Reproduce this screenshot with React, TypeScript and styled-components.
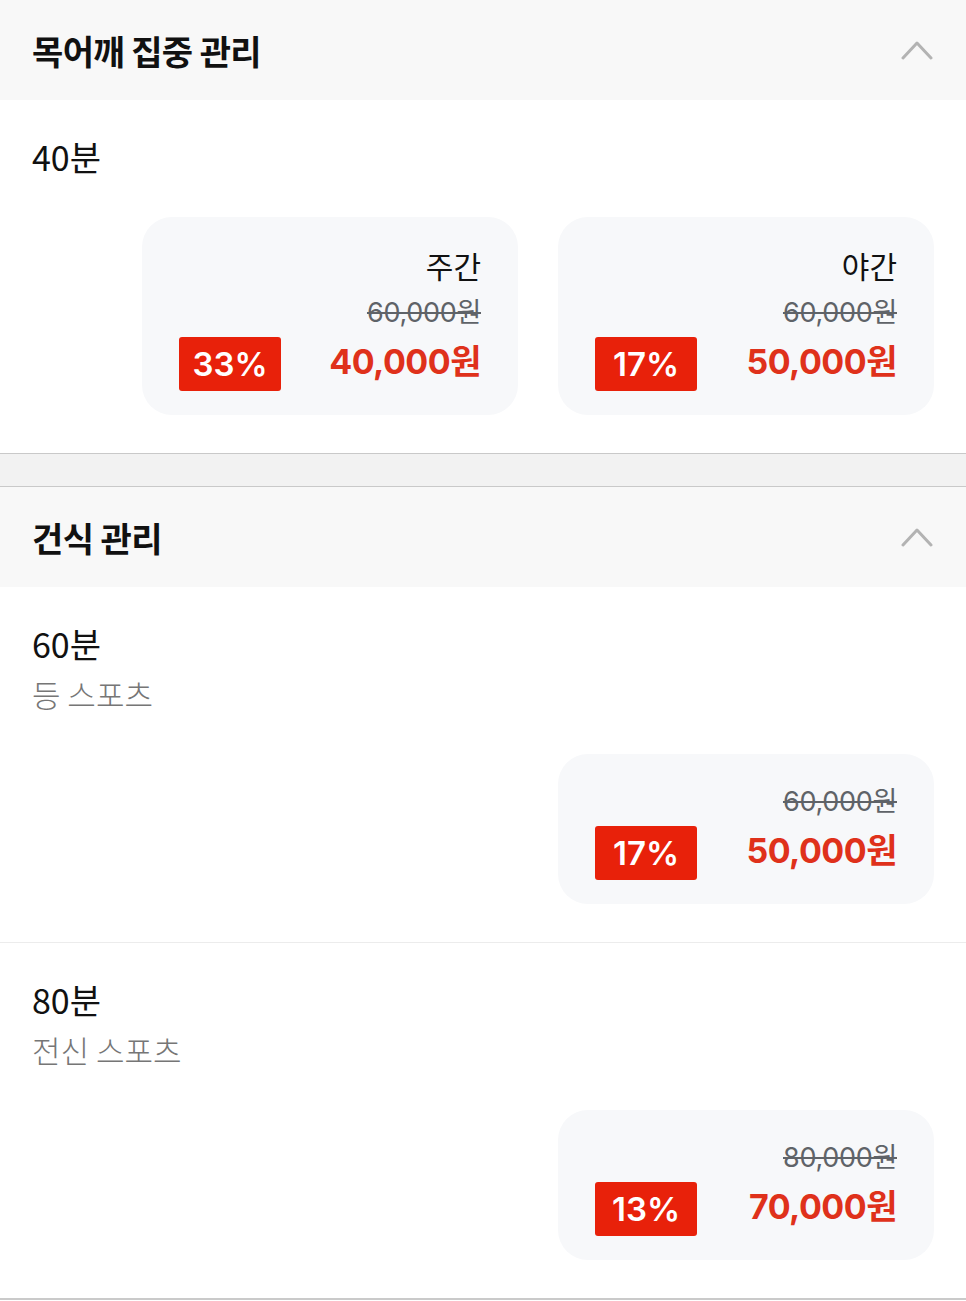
import styled, { createGlobalStyle } from "styled-components";

const GlobalStyle = createGlobalStyle`
  body {
    margin: 0;
    background: #ffffff;
    font-family: "Noto Sans CJK KR", "Noto Sans", sans-serif;
    color: #111111;
  }
`;

type Option = {
  label?: string;
  original: string;
  discount: string;
  price: string;
};

type Item = {
  duration: string;
  description?: string;
  options: Option[];
};

type Group = {
  title: string;
  items: Item[];
};

const groups: Group[] = [
  {
    title: "목어깨 집중 관리",
    items: [
      {
        duration: "40분",
        options: [
          { label: "주간", original: "60,000원", discount: "33%", price: "40,000원" },
          { label: "야간", original: "60,000원", discount: "17%", price: "50,000원" },
        ],
      },
    ],
  },
  {
    title: "건식 관리",
    items: [
      {
        duration: "60분",
        description: "등 스포츠",
        options: [{ original: "60,000원", discount: "17%", price: "50,000원" }],
      },
      {
        duration: "80분",
        description: "전신 스포츠",
        options: [{ original: "80,000원", discount: "13%", price: "70,000원" }],
      },
    ],
  },
];

const Page = styled.div`
  display: flex;
  flex-direction: column;
  border-bottom: 2px solid #cacaca;
`;

const Gap = styled.div`
  height: 32px;
  background: #f2f2f2;
  border-top: 1px solid #c9c9c9;
  border-bottom: 1px solid #c9c9c9;
`;

const Header = styled.div`
  height: 100px;
  background: #f8f8f8;
  display: flex;
  align-items: center;
  justify-content: space-between;
  padding: 0 32px;
`;

const Title = styled.h2`
  margin: 0;
  font-size: 34px;
  font-weight: 700;
  letter-spacing: -0.6px;
  color: #111111;
`;

const Chevron = styled.svg`
  width: 32px;
  height: 20px;
  margin-right: 1px;
`;

const ItemBlock = styled.div<{ $divided: boolean }>`
  display: flex;
  flex-direction: column;
  padding: 37px 32px 38px;
  border-top: ${(p) => (p.$divided ? "1px solid #ececec" : "none")};
`;

const Duration = styled.div`
  font-size: 34px;
  line-height: 40px;
  font-weight: 400;
  color: #111111;
`;

const Description = styled.div`
  margin-top: 10px;
  font-size: 31px;
  line-height: 40px;
  font-weight: 300;
  color: #767676;
`;

const Options = styled.div`
  margin-top: 40px;
  display: flex;
  justify-content: flex-end;
  gap: 40px;
`;

const Card = styled.div`
  width: 376px;
  box-sizing: border-box;
  padding: 30px 37px 24px;
  background: #f7f8fa;
  border-radius: 30px;
  display: flex;
  flex-direction: column;
  align-items: flex-end;
`;

const CardLabel = styled.div`
  font-size: 30px;
  line-height: 36px;
  color: #111111;
  margin-bottom: 12px;
`;

const Original = styled.div`
  font-family: "Inter", "Noto Sans CJK KR", sans-serif;
  font-size: 27px;
  line-height: 36px;
  color: #5f6368;
  text-decoration: line-through;
  text-decoration-thickness: 2px;
  letter-spacing: -0.3px;
`;

const PriceRow = styled.div`
  margin-top: 6px;
  align-self: stretch;
  display: flex;
  align-items: center;
  justify-content: space-between;
`;

const Badge = styled.div`
  width: 102px;
  height: 54px;
  border-radius: 3px;
  background: #e8210a;
  color: #ffffff;
  display: flex;
  align-items: center;
  justify-content: center;
  font-family: "Inter", "Noto Sans CJK KR", sans-serif;
  font-size: 33px;
  line-height: 1;
  font-weight: 600;
`;

const Price = styled.div`
  font-family: "Inter", "Noto Sans CJK KR", sans-serif;
  font-size: 34px;
  line-height: 1;
  font-weight: 700;
  color: #df311b;
  letter-spacing: -0.5px;
  margin-bottom: 4px;
`;

export default function App() {
  return (
    <>
      <GlobalStyle />
      <Page>
        {groups.map((group, gi) => (
          <section key={group.title}>
            {gi > 0 && <Gap />}
            <Header>
              <Title>{group.title}</Title>
              <Chevron viewBox="0 0 32 20" fill="none">
                <polyline
                  points="2,18 16,3 30,18"
                  stroke="#b3b3b3"
                  strokeWidth="3"
                  strokeLinecap="round"
                  strokeLinejoin="round"
                />
              </Chevron>
            </Header>
            {group.items.map((item, ii) => (
              <ItemBlock key={item.duration} $divided={ii > 0}>
                <Duration>{item.duration}</Duration>
                {item.description && <Description>{item.description}</Description>}
                <Options>
                  {item.options.map((opt, oi) => (
                    <Card key={oi}>
                      {opt.label && <CardLabel>{opt.label}</CardLabel>}
                      <Original>{opt.original}</Original>
                      <PriceRow>
                        <Badge>{opt.discount}</Badge>
                        <Price>{opt.price}</Price>
                      </PriceRow>
                    </Card>
                  ))}
                </Options>
              </ItemBlock>
            ))}
          </section>
        ))}
      </Page>
    </>
  );
}
